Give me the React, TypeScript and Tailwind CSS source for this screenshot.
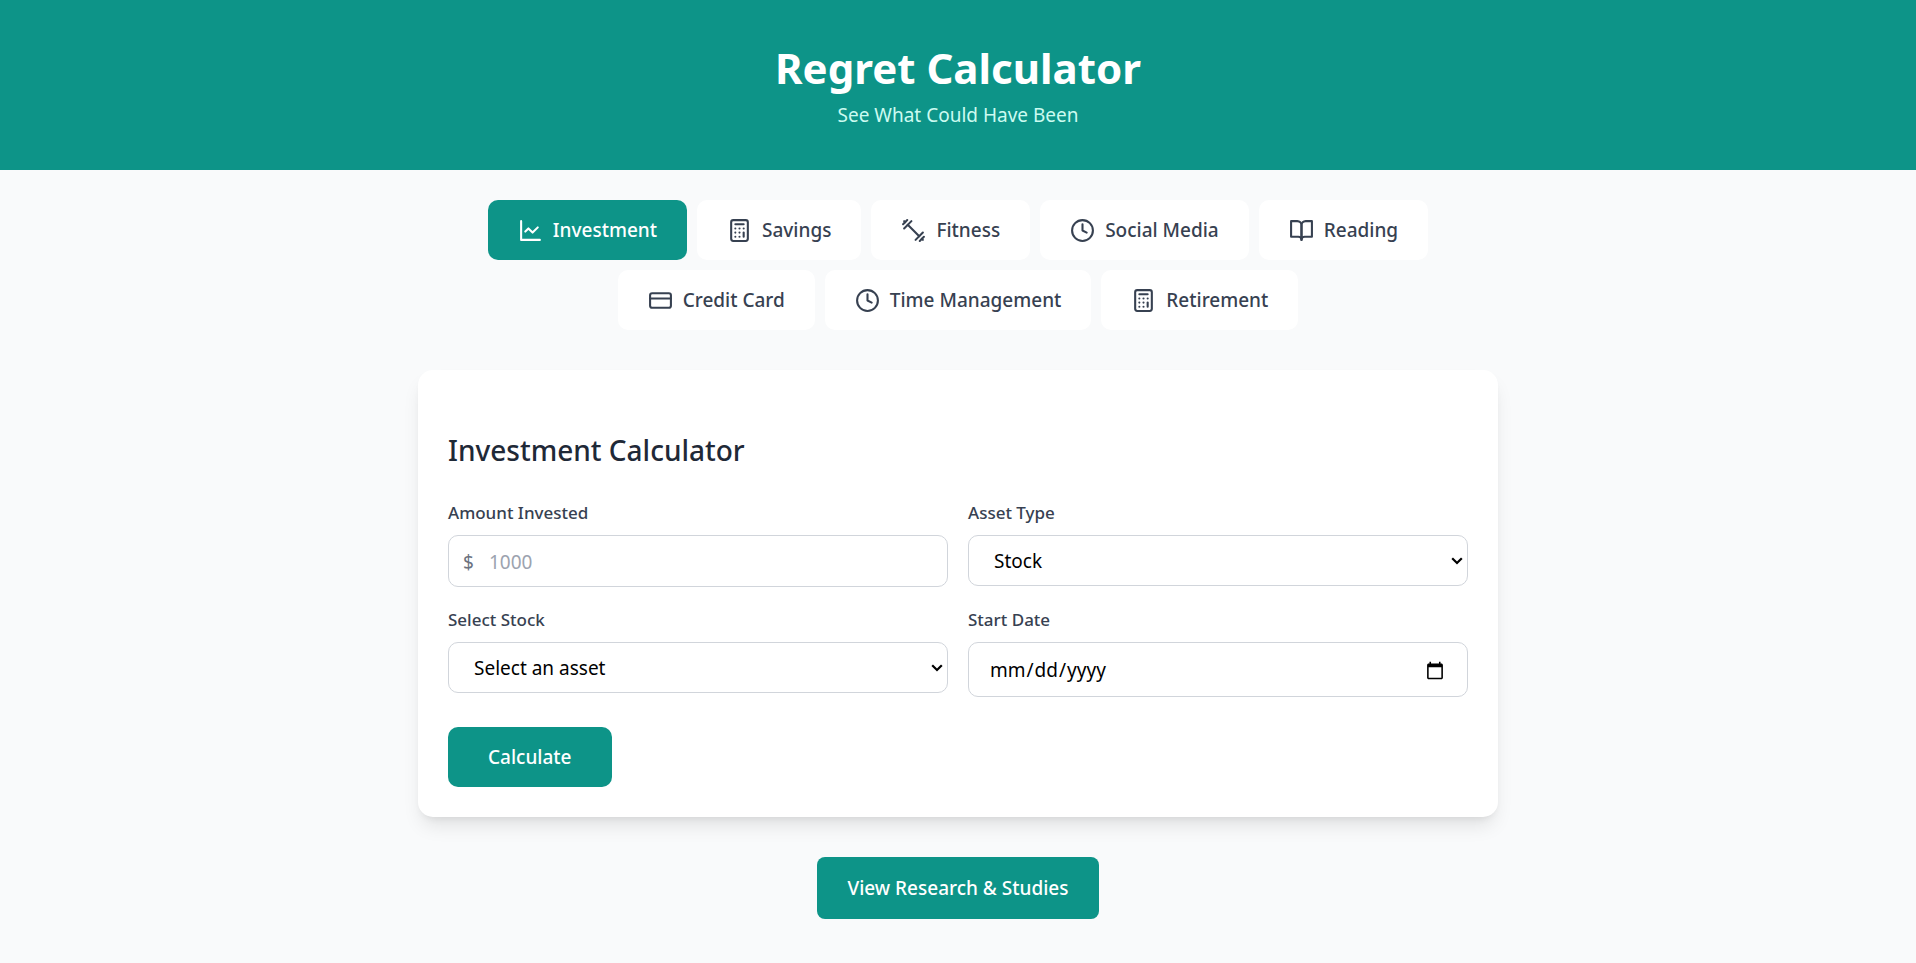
import { useState } from "react";
import type { ReactNode } from "react";
import { Calculator, Clock, CreditCard } from "lucide-react";
import clsx from "clsx";

const OutlineIcon = ({ children }: { children: ReactNode }) => (
  <svg
    width="25"
    height="25"
    viewBox="0 0 24 24"
    fill="none"
    stroke="currentColor"
    strokeWidth="2"
    strokeLinecap="round"
    strokeLinejoin="round"
    aria-hidden="true"
  >
    {children}
  </svg>
);

const tabs = [
  {
    name: "Investment",
    icon: (
      <OutlineIcon>
        <path d="M3 3v18h18" />
        <path d="m19 9-5 5-4-4-3 3" />
      </OutlineIcon>
    ),
  },
  { name: "Savings", icon: <Calculator size={25} /> },
  {
    name: "Fitness",
    icon: (
      <OutlineIcon>
        <path d="m6.5 6.5 11 11" />
        <path d="m21 21-1-1" />
        <path d="m3 3 1 1" />
        <path d="m18 22 4-4" />
        <path d="m2 6 4-4" />
        <path d="m3 10 7-7" />
        <path d="m14 21 7-7" />
      </OutlineIcon>
    ),
  },
  { name: "Social Media", icon: <Clock size={25} /> },
  {
    name: "Reading",
    icon: (
      <OutlineIcon>
        <path d="M2 3h6a4 4 0 0 1 4 4v14a3 3 0 0 0-3-3H2z" />
        <path d="M22 3h-6a4 4 0 0 0-4 4v14a3 3 0 0 1 3-3h7z" />
      </OutlineIcon>
    ),
  },
  { name: "Credit Card", icon: <CreditCard size={25} /> },
  { name: "Time Management", icon: <Clock size={25} /> },
  { name: "Retirement", icon: <Calculator size={25} /> },
];

const labelClass = "block mb-[10px] text-[17px] leading-[25px] font-medium text-[#374151]";
const fieldClass = "block w-full rounded-[10px] border border-[#d1d5db] bg-white pt-0.5 text-[19px] text-black";

const SelectField = ({ id, label, options }: { id: string; label: string; options: string[] }) => (
  <div>
    <label htmlFor={id} className={labelClass}>
      {label}
    </label>
    <div className="relative">
      <select id={id} className={clsx(fieldClass, "h-[51px] appearance-none pl-[25px] pr-5")}>
        {options.map((option) => (
          <option key={option}>{option}</option>
        ))}
      </select>
      <svg
        className="pointer-events-none absolute inset-y-0 right-[5px] my-auto"
        width="12"
        height="8"
        viewBox="0 0 12 8"
        fill="none"
        stroke="black"
        strokeWidth="2.2"
        aria-hidden="true"
      >
        <path d="M1.2 1.2 6 6l4.8-4.8" />
      </svg>
    </div>
  </div>
);

const InvestmentForm = () => {
  return (
    <form onSubmit={(e) => e.preventDefault()}>
      <h2 className="mb-[30px] text-[28px] leading-[40px] font-medium text-[#1f2937]">
        Investment Calculator
      </h2>
      <div className="grid grid-cols-1 md:grid-cols-2 items-start gap-5">
        <div>
          <label htmlFor="amount" className={labelClass}>
            Amount Invested
          </label>
          <div className="relative">
            <span className="absolute inset-y-0 left-[15px] flex items-center pt-0.5 text-[19px] text-[#6b7280]">
              $
            </span>
            <input
              id="amount"
              type="number"
              placeholder="1000"
              className={clsx(fieldClass, "h-[52px] pl-10 pr-5 placeholder:text-[#9ca3af]")}
            />
          </div>
        </div>
        <SelectField id="asset-type" label="Asset Type" options={["Stock", "Crypto"]} />
        <SelectField id="stock" label="Select Stock" options={["Select an asset"]} />
        <div>
          <label htmlFor="start-date" className={labelClass}>
            Start Date
          </label>
          <input
            id="start-date"
            type="date"
            className={clsx(
              fieldClass,
              "h-[55px] px-5 [&::-webkit-calendar-picker-indicator]:size-5"
            )}
          />
        </div>
      </div>
      <button
        type="submit"
        className="mt-[30px] h-[60px] rounded-[10px] bg-[#0d9488] px-10 text-[19px] font-medium text-white"
      >
        Calculate
      </button>
    </form>
  );
};

const App = () => {
  const [active, setActive] = useState("Investment");

  return (
    <div className="min-h-screen bg-[#f9fafb] font-['Noto_Sans','Open_Sans',sans-serif]">
      <header className="bg-[#0d9488] py-10 text-center">
        <h1 className="text-[42px] leading-[56px] font-bold text-white">Regret Calculator</h1>
        <p className="mt-1 text-[19px] leading-[30px] text-[#ccfbf1]">
          See What Could Have Been
        </p>
      </header>
      <main className="mx-auto max-w-[1120px] px-5 pt-[30px] pb-10">
        <nav className="mb-10 flex flex-wrap justify-center gap-[10px]">
          {tabs.map((tab) => (
            <button
              key={tab.name}
              type="button"
              onClick={() => setActive(tab.name)}
              className={clsx(
                "flex h-[60px] items-center gap-[10px] rounded-[10px] px-[30px] text-[19px] font-medium",
                active === tab.name ? "bg-[#0d9488] text-white" : "bg-white text-[#374151]"
              )}
            >
              {tab.icon}
              {tab.name}
            </button>
          ))}
        </nav>
        <section className="rounded-[15px] bg-white px-[30px] pt-[60px] pb-[30px] shadow-[0_12px_19px_-4px_rgba(0,0,0,0.1),0_5px_8px_-5px_rgba(0,0,0,0.1)]">
          <InvestmentForm />
        </section>
        <div className="mt-10 flex justify-center">
          <button
            type="button"
            className="h-[62px] rounded-[8px] bg-[#0d9488] px-[30px] text-[19px] font-medium text-white"
          >
            View Research &amp; Studies
          </button>
        </div>
      </main>
    </div>
  );
};

export default App;
